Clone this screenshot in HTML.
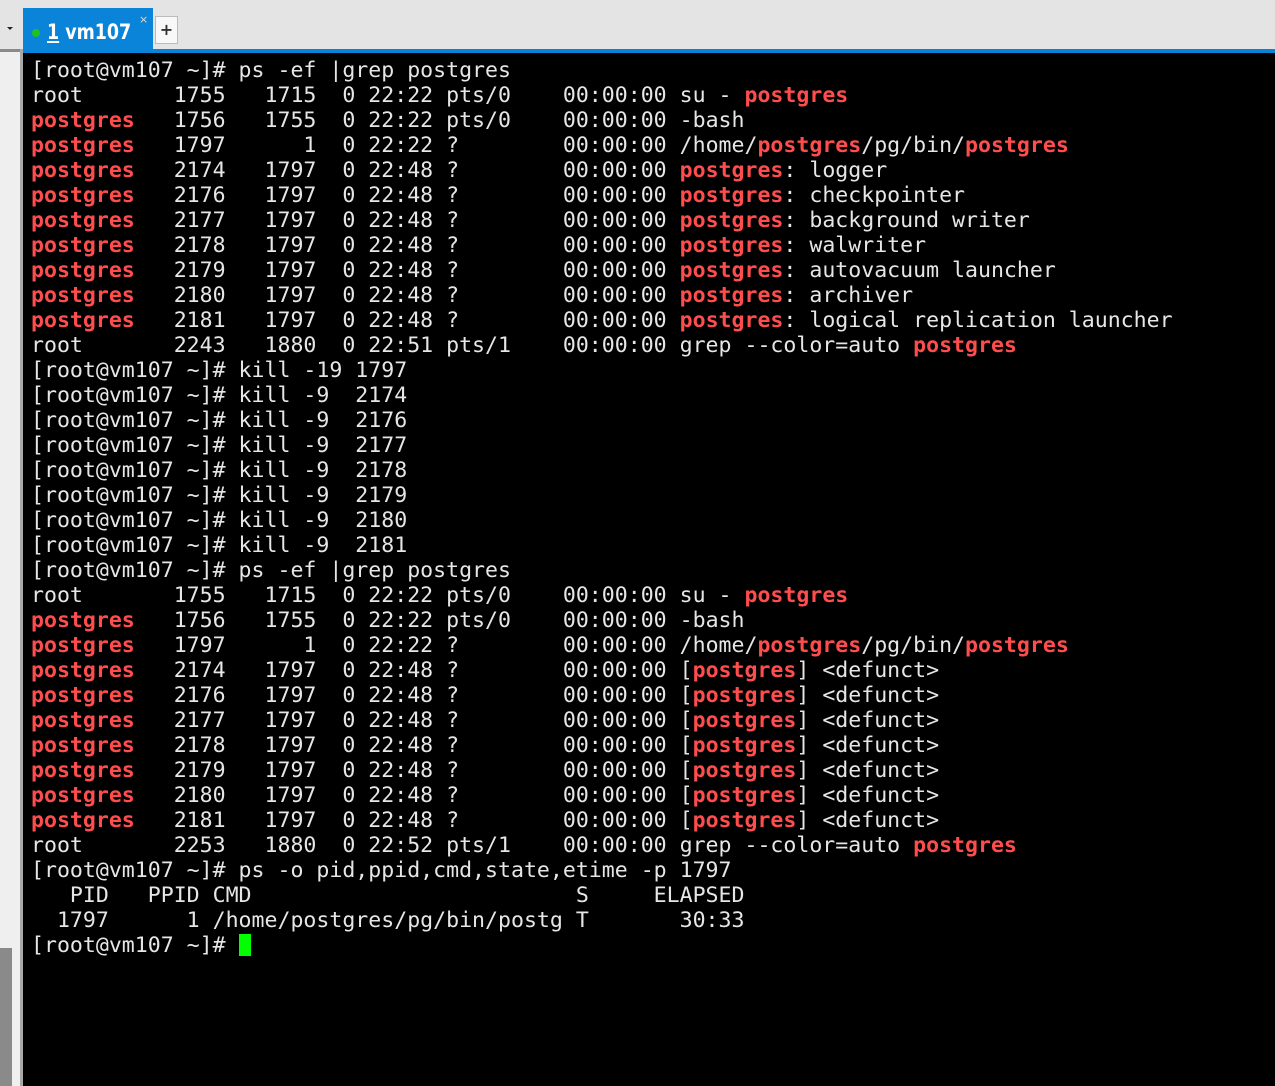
<!DOCTYPE html>
<html><head><meta charset="utf-8"><style>
*{margin:0;padding:0}
body{width:1275px;height:1086px;background:#e4e4e4;position:relative;overflow:hidden;font-family:"DejaVu Sans Mono","Liberation Mono",monospace}
.left{position:absolute;left:0;top:49px;width:20px;height:1037px;background:#efefef;border-top:3px solid #8a8a8a;box-sizing:border-box}
.lb{position:absolute;left:20px;top:49px;width:3px;height:1037px;background:#a8a8a8}
.strip{position:absolute;left:0;top:948px;width:12px;height:138px;background:#8a8a8a}
.blue{position:absolute;left:23px;top:49px;right:0;height:4px;background:#0a84d8}
.tab{position:absolute;left:23px;top:8px;width:130px;height:44px;background:#0a84d8;color:#fff;font-family:"DejaVu Sans","Liberation Sans",sans-serif;font-weight:bold;font-size:21px}
.tab .dot{position:absolute;left:9px;top:21px;width:8px;height:8px;border-radius:50%;background:#1ec21e}
.tab .t{position:absolute;left:24px;top:12px;transform:scaleX(0.83);transform-origin:left}
.tab .x{position:absolute;left:116px;top:5px;font-size:11px;font-weight:normal;color:#ddd}
.plus{position:absolute;left:155px;top:16px;width:21px;height:26px;background:#f8f8f8;border:1px solid #bbb;font:bold 16px "DejaVu Sans",sans-serif;text-align:center;line-height:26px;color:#333}
.arrow{position:absolute;left:7px;top:27px;width:0;height:0;border-left:3px solid transparent;border-right:3px solid transparent;border-top:3px solid #222}
.term{position:absolute;left:23px;top:53px;right:0;bottom:0;background:#000}
pre{position:absolute;left:31px;top:58px;font-family:"DejaVu Sans Mono","Liberation Mono",monospace;font-size:21.55px;line-height:25px;color:#e6e6e6;letter-spacing:0}
.r{color:#ff4d4d;font-weight:bold}
.cur{display:inline-block;width:12px;height:22px;background:#00ff00;vertical-align:-4px}
</style></head><body>
<div class="arrow"></div>
<div class="left"></div><div class="lb"></div><div class="strip"></div>
<div class="tab"><div class="dot"></div><div class="t"><u>1</u> vm107</div><div class="x">×</div></div>
<div class="plus">+</div>
<div class="blue"></div>
<div class="term"></div>
<pre>[root@vm107 ~]# ps -ef |grep postgres
root       1755   1715  0 22:22 pts/0    00:00:00 su - <span class="r">postgres</span>
<span class="r">postgres</span>   1756   1755  0 22:22 pts/0    00:00:00 -bash
<span class="r">postgres</span>   1797      1  0 22:22 ?        00:00:00 /home/<span class="r">postgres</span>/pg/bin/<span class="r">postgres</span>
<span class="r">postgres</span>   2174   1797  0 22:48 ?        00:00:00 <span class="r">postgres</span>: logger
<span class="r">postgres</span>   2176   1797  0 22:48 ?        00:00:00 <span class="r">postgres</span>: checkpointer
<span class="r">postgres</span>   2177   1797  0 22:48 ?        00:00:00 <span class="r">postgres</span>: background writer
<span class="r">postgres</span>   2178   1797  0 22:48 ?        00:00:00 <span class="r">postgres</span>: walwriter
<span class="r">postgres</span>   2179   1797  0 22:48 ?        00:00:00 <span class="r">postgres</span>: autovacuum launcher
<span class="r">postgres</span>   2180   1797  0 22:48 ?        00:00:00 <span class="r">postgres</span>: archiver
<span class="r">postgres</span>   2181   1797  0 22:48 ?        00:00:00 <span class="r">postgres</span>: logical replication launcher
root       2243   1880  0 22:51 pts/1    00:00:00 grep --color=auto <span class="r">postgres</span>
[root@vm107 ~]# kill -19 1797
[root@vm107 ~]# kill -9  2174
[root@vm107 ~]# kill -9  2176
[root@vm107 ~]# kill -9  2177
[root@vm107 ~]# kill -9  2178
[root@vm107 ~]# kill -9  2179
[root@vm107 ~]# kill -9  2180
[root@vm107 ~]# kill -9  2181
[root@vm107 ~]# ps -ef |grep postgres
root       1755   1715  0 22:22 pts/0    00:00:00 su - <span class="r">postgres</span>
<span class="r">postgres</span>   1756   1755  0 22:22 pts/0    00:00:00 -bash
<span class="r">postgres</span>   1797      1  0 22:22 ?        00:00:00 /home/<span class="r">postgres</span>/pg/bin/<span class="r">postgres</span>
<span class="r">postgres</span>   2174   1797  0 22:48 ?        00:00:00 [<span class="r">postgres</span>] &lt;defunct&gt;
<span class="r">postgres</span>   2176   1797  0 22:48 ?        00:00:00 [<span class="r">postgres</span>] &lt;defunct&gt;
<span class="r">postgres</span>   2177   1797  0 22:48 ?        00:00:00 [<span class="r">postgres</span>] &lt;defunct&gt;
<span class="r">postgres</span>   2178   1797  0 22:48 ?        00:00:00 [<span class="r">postgres</span>] &lt;defunct&gt;
<span class="r">postgres</span>   2179   1797  0 22:48 ?        00:00:00 [<span class="r">postgres</span>] &lt;defunct&gt;
<span class="r">postgres</span>   2180   1797  0 22:48 ?        00:00:00 [<span class="r">postgres</span>] &lt;defunct&gt;
<span class="r">postgres</span>   2181   1797  0 22:48 ?        00:00:00 [<span class="r">postgres</span>] &lt;defunct&gt;
root       2253   1880  0 22:52 pts/1    00:00:00 grep --color=auto <span class="r">postgres</span>
[root@vm107 ~]# ps -o pid,ppid,cmd,state,etime -p 1797
   PID   PPID CMD                         S     ELAPSED
  1797      1 /home/postgres/pg/bin/postg T       30:33
[root@vm107 ~]# <span class="cur"></span></pre>
</body></html>
